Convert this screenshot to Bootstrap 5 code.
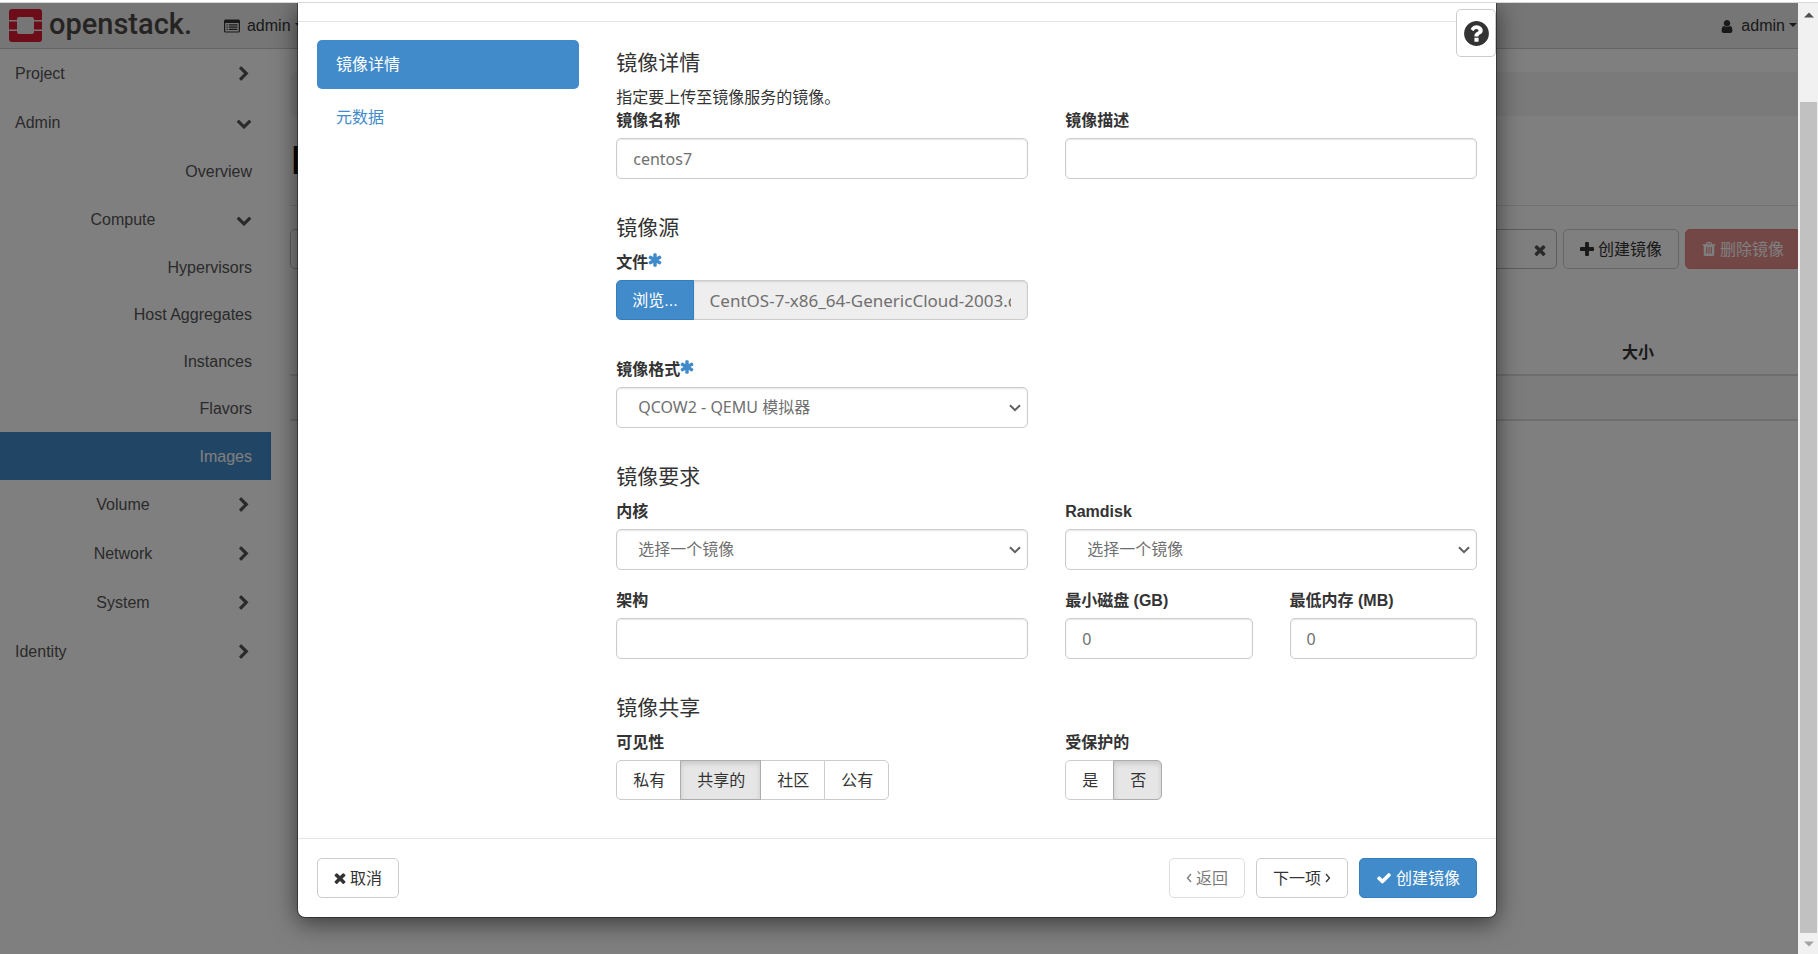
<!DOCTYPE html>
<html lang="zh-CN">
<head>
<meta charset="utf-8">
<meta name="viewport" content="width=device-width, initial-scale=1">
<title>Images - OpenStack Dashboard</title>
<link href="https://cdn.jsdelivr.net/npm/bootstrap@5.3.0/dist/css/bootstrap.min.css" rel="stylesheet">
<style>
  body { font: 16px/23px "Liberation Sans", "Noto Sans CJK SC", sans-serif; color: #333; }
  .ico { width: 16px; height: 16px; fill: currentColor; flex: none; }
  .ico-14 { width: 14px; height: 14px; }
  .ico-12 { width: 12px; height: 12px; }
  .ico-angle { width: 6px; height: 12px; fill: none; stroke: currentColor; stroke-width: 1.3; flex: none; }
  .window-edge { height: 3px; border-bottom: 1px solid #d8d8d8; flex: none; }

  /* dashboard behind the dialog */
  .topbar { height: 46px; background: #ececec; border-bottom: 1px solid #c8c8c8; padding: 0 21px 0 9px; }
  .topbar a { color: #333; text-decoration: none; gap: 7px; }
  .brand-name { font: 500 29px/34px Roboto, sans-serif; color: #4d4845; padding-bottom: 4px; }
  .sidebar { width: 271px; flex: none; }
  .sidebar a { color: #555; text-decoration: none; display: flex; align-items: center; }
  .side-group { height: 49px; padding: 0 19px 0 15px; gap: 5px; }
  .side-leaf { height: 47px; padding: 0 19px; justify-content: flex-end; }
  .side-leaf.side-top { height: 48px; }
  .sidebar a.side-leaf.active { background: #428bca; color: #fff; height: 48px; }
  .main-area { padding: 23px 17px 0 19px; min-width: 0; }
  .crumbs { height: 44px; background: #f5f5f5; border-radius: 5px; }
  .main-area h1 { font-size: 41px; line-height: 45px; margin: 22px 0; color: #111; }
  .toolbar { border-top: 1px solid #e3e3e3; padding-top: 23px; gap: 6px; }
  .search-field { height: 40px; border: 1px solid #bbb; border-radius: 5px; padding: 0 10px 0 17px; }
  .search-field input { border: 0; background: none; min-width: 0; }
  .clear-btn { border: 0; background: none; color: #555; padding: 0; line-height: 1; }
  .images-table { margin: 61px 0 0; table-layout: fixed; }
  .images-table th { border-bottom: 2px solid #ddd; padding: 9px 11px; height: 45px; }
  .images-table td { background: #f9f9f9; border-bottom: 2px solid #ddd; height: 45px; }

  .btn { --bs-btn-padding-x: 16px; --bs-btn-padding-y: 0; --bs-btn-font-size: 16px; --bs-btn-border-radius: 5px;
         height: 40px; line-height: 23px; display: inline-flex; align-items: center; justify-content: center; gap: 4px; white-space: nowrap; flex: none; }
  .btn-plain { --bs-btn-color: #333; --bs-btn-bg: #fff; --bs-btn-border-color: #ccc; --bs-btn-hover-bg: #e6e6e6; --bs-btn-hover-border-color: #adadad;
         --bs-btn-active-color: #333; --bs-btn-active-bg: #e6e6e6; --bs-btn-active-border-color: #adadad;
         --bs-btn-disabled-color: #333; --bs-btn-disabled-bg: #fff; --bs-btn-disabled-border-color: #ccc; }
  .btn-primary { --bs-btn-bg: #428bca; --bs-btn-border-color: #357ebd; }
  .btn-danger { --bs-btn-disabled-bg: #d9534f; --bs-btn-disabled-border-color: #d43f3a; }

  /* dialog */
  .shade { position: absolute; inset: 0; background: rgba(0,0,0,.5); }
  .wizard { position: absolute; width: calc(100% - 24px); overflow: visible; }
  .wizard .modal-dialog { max-width: 1200px; margin: 0 auto; }
  .wizard .modal-content { border: 1px solid rgba(0,0,0,.4); border-top: 0; border-radius: 0 0 8px 8px; color: #333;
         background-clip: padding-box; box-shadow: 0 5px 24px rgba(0,0,0,.55); }
  .wizard .modal-header { height: 19px; padding: 0; border-color: #e5e5e5; }
  .wizard .modal-body { padding: 18px 19px 19px; }
  .wizard .modal-footer { padding: 19px; border-color: #e5e5e5; gap: 11px; }
  .wizard .modal-footer > * { margin: 0; }
  .wizard .row { --bs-gutter-x: 37px; }
  .help-btn { position: absolute; top: 6px; right: 0; width: 40px; height: 48px; z-index: 1; --bs-btn-padding-x: 0; }
  .help-btn .ico { width: 29px; height: 29px; }
  .steps .nav-link { height: 49px; padding: 13px 19px; border-radius: 5px; color: #428bca; }
  .steps .nav-link.active { background: #428bca; color: #fff; }
  .wizard h4 { font-size: 21px; line-height: 23px; font-weight: 400; margin: 18px 0 12px; }
  .wizard h4:first-child { margin-top: 11px; }
  .field { margin-bottom: 19px; }
  .field-file { margin-bottom: 38px; }
  .field-label { display: block; font-weight: 700; line-height: 23px; margin-bottom: 6px; }
  .field-label .ico { width: 16px; height: 16px; color: #428bca; vertical-align: 0; margin-left: -1px; }
  .wizard .form-control, .wizard .form-select { height: 41px; padding: 0 16px; font: 16px/23px "Noto Sans", "Noto Sans CJK SC", sans-serif; color: #707070;
         border: 1px solid #ccc; border-radius: 5px; box-shadow: inset 0 1px 2px rgba(0,0,0,.1); }
  .wizard .form-select { padding: 0 30px 0 21px;
         background: #fff url("data:image/svg+xml,%3Csvg xmlns='http://www.w3.org/2000/svg' viewBox='0 0 12 8'%3E%3Cpath d='M1 1.2l5 5 5-5' fill='none' stroke='%23606060' stroke-width='2'/%3E%3C/svg%3E") no-repeat right 6px center / 12px 8px; }
  .wizard .input-group .btn { --bs-btn-padding-x: 15px; }
  .wizard .input-group .form-control { height: 40px; font-size: 17px; background: #eee; border-radius: 0 5px 5px 0; }
  .wizard .btn-group .btn { padding: 0 15px 0 16px; }
  .wizard .btn-check:checked + .btn { box-shadow: inset 0 3px 5px rgba(0,0,0,.125); }

  /* scroll rail at the window's right side */
  .rail { position: absolute; top: 0; right: 0; bottom: 0; width: 20px; background: #f1f1f1; padding: 9px 1px 7px 2px; z-index: 1060; }
  .rail svg { width: 10px; height: 6px; }
  .rail-thumb { background: #c1c1c1; width: 100%; margin-top: 84px; }
</style>
</head>
<body class="vh-100 d-flex flex-column overflow-hidden">
<div class="window-edge"></div>
<div class="position-relative flex-grow-1 overflow-hidden">

  <header class="topbar d-flex align-items-center">
    <a href="#" class="d-flex align-items-center" aria-label="openstack">
      <svg width="33" height="33" viewBox="0 0 33 33" fill="#da1a32"><path d="M3 0h27a3 3 0 0 1 3 3v8h-8V10a2 2 0 0 0-2-2H10a2 2 0 0 0-2 2v1H0V3a3 3 0 0 1 3-3zM0 12.500h8v8H0zM25 12.500h8v8h-8zM0 22h8v1a2 2 0 0 0 2 2h13a2 2 0 0 0 2-2v-1h8v8a3 3 0 0 1-3 3H3a3 3 0 0 1-3-3z"/></svg>
      <span class="brand-name">openstack.</span>
    </a>
    <a href="#" class="d-flex align-items-center ms-4 ps-2">
      <svg class="ico" viewBox="0 0 16 16"><path fill-rule="evenodd" d="M1.500 1.500h13A1.500 1.500 0 0 1 16 3v10a1.500 1.500 0 0 1-1.500 1.500h-13A1.500 1.500 0 0 1 0 13V3a1.500 1.500 0 0 1 1.500-1.500zM1.200 5v8a.4.4 0 0 0 .4.4h12.800a.4.4 0 0 0 .4-.4V5zM2.500 6.200h1.200v1.200H2.500zM2.500 8.500h1.200v1.200H2.500zM2.500 10.800h1.200V12H2.500zM4.800 6.200h8.700v1.200H4.800zM4.800 8.500h8.700v1.200H4.800zM4.800 10.800h8.700V12H4.800z"/></svg>
      <span class="dropdown-toggle">admin</span>
    </a>
    <a href="#" class="d-flex align-items-center ms-auto">
      <svg class="ico ico-14" viewBox="192 0 1408 1664"><path d="M1536 1399q0 109-62.500 187t-150.500 78h-854q-88 0-150.500-78t-62.500-187q0-85 8.500-160.500t31.500-152 58.500-131 94-89 134.500-34.500q131 128 313 128t313-128q76 0 134.500 34.500t94 89 58.500 131 31.500 152 8.500 160.500zm-256-887q0 159-112.500 271.500t-271.500 112.500-271.500-112.500-112.500-271.500 112.500-271.500 271.500-112.500 271.500 112.500 112.500 271.500z"/></svg>
      <span class="dropdown-toggle">admin</span>
    </a>
  </header>

  <svg class="d-none">
    <symbol id="i-right" viewBox="0 0 1792 1792"><path d="M1363 877l-742 742q-19 19-45 19t-45-19l-166-166q-19-19-19-45t19-45l531-531-531-531q-19-19-19-45t19-45l166-166q19-19 45-19t45 19l742 742q19 19 19 45t-19 45z"/></symbol>
    <symbol id="i-down" viewBox="0 0 1792 1792"><path d="M1683 808l-742 741q-19 19-45 19t-45-19l-742-741q-19-19-19-45.500t19-45.500l166-165q19-19 45-19t45 19l531 531 531-531q19-19 45-19t45 19l166 165q19 19 19 45.500t-19 45.500z"/></symbol>
    <symbol id="i-times" viewBox="240 240 1312 1312"><path d="M1490 1322q0 40-28 68l-136 136q-28 28-68 28t-68-28l-294-294-294 294q-28 28-68 28t-68-28l-136-136q-28-28-28-68t28-68l294-294-294-294q-28-28-28-68t28-68l136-136q28-28 68-28t68 28l294 294 294-294q28-28 68-28t68 28l136 136q28 28 28 68t-28 68l-294 294 294 294q28 28 28 68z"/></symbol>
    <symbol id="i-star" viewBox="0 0 1792 1792"><path d="M1546 1050q46 26 59.500 77.500t-12.500 97.500l-64 110q-26 46-77.500 59.500t-97.500-12.500l-266-153v307q0 52-38 90t-90 38h-128q-52 0-90-38t-38-90v-307l-266 153q-46 26-97.500 12.500t-77.500-59.500l-64-110q-26-46-12.500-97.500t59.500-77.500l266-154-266-154q-46-26-59.500-77.500t12.500-97.500l64-110q26-46 77.500-59.500t97.500 12.500l266 153v-307q0-52 38-90t90-38h128q52 0 90 38t38 90v307l266-153q46-26 97.500-12.500t77.500 59.500l64 110q26 46 12.500 97.500t-59.500 77.500l-266 154z"/></symbol>
  </svg>

  <div class="d-flex">
    <nav class="sidebar">
      <a href="#" class="side-group"><span class="flex-grow-1">Project</span><svg class="ico"><use href="#i-right"/></svg></a>
      <a href="#" class="side-group"><span class="flex-grow-1">Admin</span><svg class="ico"><use href="#i-down"/></svg></a>
      <a href="#" class="side-leaf side-top">Overview</a>
      <a href="#" class="side-group"><span class="flex-grow-1 text-center">Compute</span><svg class="ico"><use href="#i-down"/></svg></a>
      <a href="#" class="side-leaf">Hypervisors</a>
      <a href="#" class="side-leaf">Host Aggregates</a>
      <a href="#" class="side-leaf">Instances</a>
      <a href="#" class="side-leaf">Flavors</a>
      <a href="#" class="side-leaf active">Images</a>
      <a href="#" class="side-group"><span class="flex-grow-1 text-center">Volume</span><svg class="ico"><use href="#i-right"/></svg></a>
      <a href="#" class="side-group"><span class="flex-grow-1 text-center">Network</span><svg class="ico"><use href="#i-right"/></svg></a>
      <a href="#" class="side-group"><span class="flex-grow-1 text-center">System</span><svg class="ico"><use href="#i-right"/></svg></a>
      <a href="#" class="side-group"><span class="flex-grow-1">Identity</span><svg class="ico"><use href="#i-right"/></svg></a>
    </nav>
    <main class="main-area flex-grow-1">
      <div class="crumbs"></div>
      <h1>Images</h1>
      <div class="toolbar d-flex">
        <div class="search-field d-flex align-items-center flex-grow-1">
          <input type="text" class="flex-grow-1" aria-label="Search">
          <button type="button" class="clear-btn" aria-label="Clear"><svg class="ico ico-12"><use href="#i-times"/></svg></button>
        </div>
        <button type="button" class="btn btn-plain"><svg class="ico ico-14" viewBox="192 128 1408 1408"><path d="M1600 736v192q0 40-28 68t-68 28h-416v416q0 40-28 68t-68 28h-192q-40 0-68-28t-28-68v-416h-416q-40 0-68-28t-28-68v-192q0-40 28-68t68-28h416v-416q0-40 28-68t68-28h192q40 0 68 28t28 68v416h416q40 0 68 28t28 68z"/></svg>创建镜像</button>
        <button type="button" class="btn btn-danger" disabled><svg class="ico ico-14" viewBox="192 128 1408 1536"><path d="M704 1376v-704q0-14-9-23t-23-9h-64q-14 0-23 9t-9 23v704q0 14 9 23t23 9h64q14 0 23-9t9-23zm256 0v-704q0-14-9-23t-23-9h-64q-14 0-23 9t-9 23v704q0 14 9 23t23 9h64q14 0 23-9t9-23zm256 0v-704q0-14-9-23t-23-9h-64q-14 0-23 9t-9 23v704q0 14 9 23t23 9h64q14 0 23-9t9-23zm-544-992h448l-48-117q-7-9-17-11h-317q-10 2-17 11zm928 32v64q0 14-9 23t-23 9h-96v948q0 83-47 143.500t-113 60.500h-832q-66 0-113-58.500t-47-141.500v-952h-96q-14 0-23-9t-9-23v-64q0-14 9-23t23-9h309l70-167q15-37 54-63t79-26h320q40 0 79 26t54 63l70 167h309q14 0 23 9t9 23z"/></svg>删除镜像</button>
      </div>
      <table class="images-table w-100">
        <colgroup><col><col style="width:190px"></colgroup>
        <thead><tr><th></th><th>大小</th></tr></thead>
        <tbody><tr><td></td><td></td></tr></tbody>
      </table>
    </main>
  </div>

  <div class="shade"></div>

  <div class="modal wizard d-block" role="dialog" aria-label="创建镜像">
    <div class="modal-dialog">
      <form class="modal-content">
        <button type="button" class="btn btn-plain help-btn" aria-label="帮助"><svg class="ico" viewBox="0 0 1792 1792"><path d="M1024 1376v-192q0-14-9-23t-23-9h-192q-14 0-23 9t-9 23v192q0 14 9 23t23 9h192q14 0 23-9t9-23zm256-672q0-88-55.500-163t-138.500-116-170-41q-243 0-371 213-15 24 8 42l132 100q7 6 19 6 16 0 25-12 53-68 86-92 34-24 86-24 48 0 85.500 26t37.500 59q0 38-20 61t-68 45q-63 28-115.500 86.500t-52.500 125.500v36q0 14 9 23t23 9h192q14 0 23-9t9-23q0-19 21.500-49.500t54.500-49.500q32-18 49-28.500t46-35 44.500-48 28-60.500 12.500-81zm384 192q0 209-103 385.500t-279.500 279.500-385.500 103-385.500-103-279.500-279.500-103-385.500 103-385.500 279.500-279.500 385.500-103 385.500 103 279.500 279.500 103 385.500z"/></svg></button>
        <div class="modal-header"></div>
        <div class="modal-body">
          <div class="row">
            <div class="col-3">
              <nav class="nav nav-pills flex-column gap-1 steps">
                <a class="nav-link active" href="#">镜像详情</a>
                <a class="nav-link" href="#">元数据</a>
              </nav>
            </div>
            <div class="col-9">
              <h4>镜像详情</h4>
              <div>指定要上传至镜像服务的镜像。</div>
              <div class="row">
                <div class="col-6 field"><label class="field-label" for="name">镜像名称</label><input id="name" type="text" class="form-control" value="centos7"></div>
                <div class="col-6 field"><label class="field-label" for="desc">镜像描述</label><input id="desc" type="text" class="form-control"></div>
              </div>

              <h4>镜像源</h4>
              <div class="row">
                <div class="col-6 field field-file">
                  <label class="field-label" for="file">文件<svg class="ico"><use href="#i-star"/></svg></label>
                  <div class="input-group flex-nowrap">
                    <button type="button" class="btn btn-primary">浏览...</button>
                    <input id="file" type="text" class="form-control" readonly value="CentOS-7-x86_64-GenericCloud-2003.qcow2">
                  </div>
                </div>
              </div>
              <div class="row">
                <div class="col-6 field"><label class="field-label" for="format">镜像格式<svg class="ico"><use href="#i-star"/></svg></label>
                  <select id="format" class="form-select"><option>QCOW2 - QEMU 模拟器</option></select></div>
              </div>

              <h4>镜像要求</h4>
              <div class="row">
                <div class="col-6 field"><label class="field-label" for="kernel">内核</label>
                  <select id="kernel" class="form-select"><option>选择一个镜像</option></select></div>
                <div class="col-6 field"><label class="field-label" for="ramdisk">Ramdisk</label>
                  <select id="ramdisk" class="form-select"><option>选择一个镜像</option></select></div>
              </div>
              <div class="row">
                <div class="col-6 field"><label class="field-label" for="arch">架构</label><input id="arch" type="text" class="form-control"></div>
                <div class="col-3 field"><label class="field-label" for="disk">最小磁盘 (GB)</label><input id="disk" type="text" inputmode="numeric" class="form-control" value="0"></div>
                <div class="col-3 field"><label class="field-label" for="ram">最低内存 (MB)</label><input id="ram" type="text" inputmode="numeric" class="form-control" value="0"></div>
              </div>

              <h4>镜像共享</h4>
              <div class="row">
                <div class="col-6 field">
                  <span class="field-label" id="vis">可见性</span>
                  <div class="btn-group" role="group" aria-labelledby="vis">
                    <input type="radio" class="btn-check" name="vis" id="v1"><label class="btn btn-plain" for="v1">私有</label>
                    <input type="radio" class="btn-check" name="vis" id="v2" checked><label class="btn btn-plain" for="v2">共享的</label>
                    <input type="radio" class="btn-check" name="vis" id="v3"><label class="btn btn-plain" for="v3">社区</label>
                    <input type="radio" class="btn-check" name="vis" id="v4"><label class="btn btn-plain" for="v4">公有</label>
                  </div>
                </div>
                <div class="col-6 field">
                  <span class="field-label" id="prot">受保护的</span>
                  <div class="btn-group" role="group" aria-labelledby="prot">
                    <input type="radio" class="btn-check" name="prot" id="p1"><label class="btn btn-plain" for="p1">是</label>
                    <input type="radio" class="btn-check" name="prot" id="p2" checked><label class="btn btn-plain" for="p2">否</label>
                  </div>
                </div>
              </div>
            </div>
          </div>
        </div>
        <div class="modal-footer">
          <button type="button" class="btn btn-plain me-auto"><svg class="ico ico-12"><use href="#i-times"/></svg>取消</button>
          <button type="button" class="btn btn-plain" disabled><svg class="ico-angle" viewBox="0 0 6 12"><path d="M5 2L1.500 6 5 10"/></svg>返回</button>
          <button type="button" class="btn btn-plain">下一项<svg class="ico-angle" viewBox="0 0 6 12"><path d="M1 2l3.500 4L1 10"/></svg></button>
          <button type="button" class="btn btn-primary"><svg class="ico" viewBox="0 0 1792 1792"><path d="M1671 566q0 40-28 68l-724 724-136 136q-28 28-68 28t-68-28l-136-136-362-362q-28-28-28-68t28-68l136-136q28-28 68-28t68 28l294 295 656-657q28-28 68-28t68 28l136 136q28 28 28 68z"/></svg>创建镜像</button>
        </div>
      </form>
    </div>
  </div>

  <div class="rail d-flex flex-column align-items-center">
    <svg viewBox="0 0 10 6"><path d="M0 5.500L5 .5l5 5z" fill="#505050"/></svg>
    <div class="rail-thumb flex-grow-1 mb-1"></div>
    <svg class="mt-1" viewBox="0 0 10 6"><path d="M0 .5h10l-5 5z" fill="#a3a3a3"/></svg>
  </div>
</div>
<script src="https://cdn.jsdelivr.net/npm/bootstrap@5.3.0/dist/js/bootstrap.bundle.min.js"></script>
</body>
</html>
